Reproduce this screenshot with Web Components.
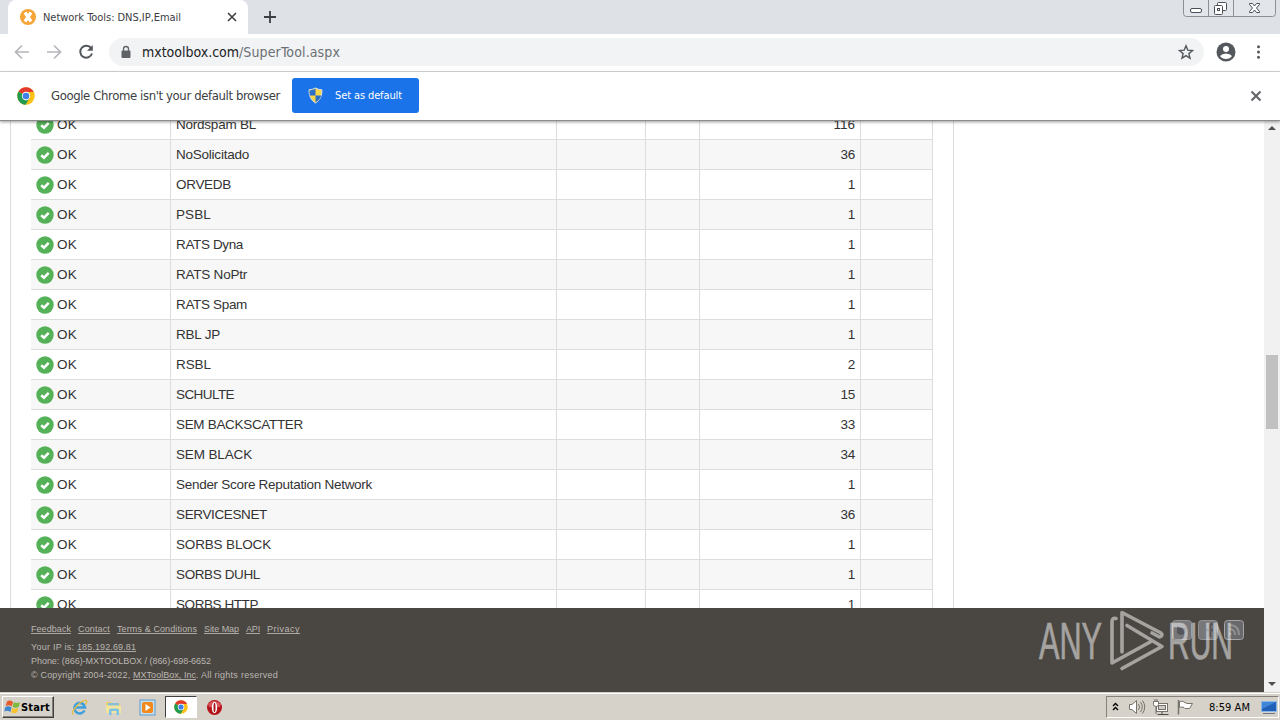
<!DOCTYPE html>
<html lang="en">
<head>
<meta charset="utf-8">
<title>Network Tools: DNS,IP,Email</title>
<style>
    html, body { margin: 0; height: 100%; overflow: hidden; background: #fff; }
    body { font-family: "Liberation Sans", Arial, sans-serif; }
</style>
</head>
<body>
<desktop-screen></desktop-screen>

<script>
const UI_FONT = '"DejaVu Sans Condensed", "DejaVu Sans", "Open Sans", sans-serif';

const CHROME_LOGO = `
    <svg viewBox="0 0 18 18">
        <circle cx="9" cy="9" r="8.700" fill="#fbc116"/>
        <path d="M9 9 L1.500 4.600 A8.700 8.700 0 0 1 16.700 5 H9z" fill="#e33b2e"/>
        <path d="M9 9 L1.500 4.600 A8.700 8.700 0 0 0 8.600 17.700 L12.600 11z" fill="#229a50"/>
        <circle cx="9" cy="9" r="4.200" fill="#fff"/>
        <circle cx="9" cy="9" r="3.300" fill="#3f7fe8"/>
    </svg>`;

function define(name, render) {
    customElements.define(name, class extends HTMLElement {
        constructor() {
            super();
            this.attachShadow({ mode: 'open' });
        }
        connectedCallback() {
            this.shadowRoot.innerHTML = render(this);
        }
    });
}

// Text stretched to a given width by its letter spacing
class FitText extends HTMLElement {
    constructor() {
        super();
        this.attachShadow({ mode: 'open' });
        this.shadowRoot.innerHTML = `
            <style>
                :host { display: block; flex: none; }
                span { display: inline-block; white-space: pre; }
            </style>
            <span><slot></slot></span>`;
    }
    connectedCallback() {
        const span = this.shadowRoot.querySelector('span');
        const width = parseFloat(this.getAttribute('width'));
        const count = this.textContent.length;
        const gap = (width - span.getBoundingClientRect().width) / count;
        span.style.letterSpacing = gap.toFixed(3) + 'px';
        this.style.width = width + 'px';
    }
}

define('window-controls', () => `
    <style>
        :host { display: block; width: 93px; height: 17px; }
        svg { display: block; }
    </style>
    <svg width="93" height="17" fill="none" stroke="#8b8f96">
        <path d="M.5 0V13.500Q.5 16.500 3.500 16.500H89.500Q92.500 16.500 92.500 13.500V0M25.500 0V16M50.500 0V16" fill="#e2e5ea"/>
        <rect x="7.500" y="8.500" width="11" height="4" rx="1.500" stroke="#4b4f57" fill="#fff"/>
        <g stroke="#4b4f57" fill="#fff">
            <rect x="34.500" y="2.500" width="9" height="8" rx="1"/>
            <rect x="31.500" y="5.500" width="8" height="9" rx="1"/>
            <rect x="34.500" y="8.500" width="2" height="2"/>
            <path d="M66.500 3.500H69.500L71.500 6L73.500 3.500H76.500V4.500L73.500 8L76.500 11.500V12.500H73.500L71.500 10L69.500 12.500H66.500V11.500L69.500 8L66.500 4.500Z"/>
        </g>
    </svg>`);

define('browser-tab', () => `
    <style>
        :host {
            display: flex; align-items: center; box-sizing: border-box;
            width: 240px; height: 34px; padding: 0 10px 0 12px;
            background: #fff; border-radius: 8px 8px 0 0;
            font: 11px ${UI_FONT}; color: #3c4043;
        }
        .favicon { width: 16px; height: 16px; margin-right: 7px; }
        .close { width: 12px; height: 12px; margin-left: auto; }
    </style>
    <svg class="favicon" viewBox="0 0 16 16">
        <circle cx="8" cy="8" r="8" fill="#f5a536"/>
        <path d="M5 3.500L11 12.500M11 3.500L5 12.500" stroke="#fff" stroke-width="3.200"/>
    </svg>
    <slot></slot>
    <svg class="close" viewBox="0 0 12 12" stroke="#3c4043" stroke-width="1.600"><path d="M2 2L10 10M10 2L2 10"/></svg>`);

define('tab-strip', () => `
    <style>
        :host { display: flex; height: 34px; background: #dee1e6; padding: 0 4px 0 8px; }
        .plus { width: 12px; height: 12px; margin: 11px 0 0 16px; }
        window-controls { margin-left: auto; }
    </style>
    <browser-tab><fit-text width="138">Network Tools: DNS,IP,Email</fit-text></browser-tab>
    <svg class="plus" viewBox="0 0 12 12" stroke="#3c4043" stroke-width="1.800"><path d="M6 0V12M0 6H12"/></svg>
    <window-controls></window-controls>`);

define('address-bar', () => `
    <style>
        :host {
            display: flex; align-items: center; flex: 1; height: 28px; box-sizing: border-box;
            padding: 0 9px 0 10px; border-radius: 14px; background: #f1f3f4;
            font: 14px ${UI_FONT}; color: #202124;
        }
        .lock { width: 14px; height: 14px; margin-right: 9px; }
        .path { color: #6b6f74; }
        .star { width: 18px; height: 18px; margin-left: auto; }
    </style>
    <svg class="lock" viewBox="0 0 14 14">
        <path d="M4.500 6V4a2.500 2.500 0 0 1 5 0V6" fill="none" stroke="#5f6368" stroke-width="1.300"/>
        <rect x="2.500" y="5.500" width="9" height="7.500" rx="1" fill="#5f6368"/>
    </svg>
    <fit-text width="97">mxtoolbox.com</fit-text><fit-text class="path" width="101">/SuperTool.aspx</fit-text>
    <svg class="star" viewBox="0 0 18 18" fill="none" stroke="#54585d" stroke-width="1.400">
        <path d="M9 2.800L10.800 7.100L15.500 7.500L11.900 10.600L13 15.200L9 12.700L5 15.200L6.100 10.600L2.500 7.500L7.200 7.100Z"/>
    </svg>`);

define('nav-bar', () => `
    <style>
        :host {
            display: flex; align-items: center; height: 38px; box-sizing: border-box; padding: 0 12px 1px 13px;
            background: #fff; border-bottom: 1px solid #d9dadb;
        }
        svg { width: 18px; height: 18px; flex: none; }
        .icons { display: flex; gap: 14px; width: 96px; }
        .profile { width: 20px; height: 20px; margin: 0 16px 0 12px; }
        .menu { width: 16px; }
    </style>
    <div class="icons">
        <svg viewBox="0 0 18 18" fill="none" stroke="#b5b7ba" stroke-width="1.700"><path d="M16 9H3M9 2.500L2.500 9L9 15.500"/></svg>
        <svg viewBox="0 0 18 18" fill="none" stroke="#b5b7ba" stroke-width="1.700"><path d="M2 9H15M9 2.500L15.500 9L9 15.500"/></svg>
        <svg viewBox="0 0 18 18" fill="none" stroke="#54585d" stroke-width="2"><path d="M14.200 5.200A6 6 0 1 0 15 10.500"/><path d="M15.800 2V7.800H10Z" fill="#54585d" stroke="none"/></svg>
    </div>
    <address-bar></address-bar>
    <svg class="profile" viewBox="0 0 20 20">
        <circle cx="10" cy="10" r="9.500" fill="#54585d"/>
        <circle cx="10" cy="7" r="3" fill="#fff"/>
        <path d="M4 14Q6 11.500 10 11.500T16 14Q14 17 10 17T4 14Z" fill="#fff"/>
    </svg>
    <svg class="menu" viewBox="0 0 16 18" fill="#54585d"><circle cx="6.500" cy="3.800" r="1.500"/><circle cx="6.500" cy="9" r="1.500"/><circle cx="6.500" cy="14.200" r="1.500"/></svg>`);

define('info-bar', () => `
    <style>
        :host {
            display: flex; align-items: center; height: 49px; box-sizing: border-box; padding: 0 18px 1px 17px;
            background: #fff; border-bottom: 1px solid #8c8c8c; box-shadow: 0 1px 3px rgba(0, 0, 0, .4);
            position: relative; z-index: 1;
            font: 13px ${UI_FONT}; color: #3c4043;
        }
        .logo { width: 18px; height: 18px; margin-right: 16px; }
        .logo svg { display: block; width: 18px; height: 18px; }
        button {
            display: flex; align-items: center; width: 127px; height: 35px; margin: 0 0 0 12px; padding: 0 0 0 15px;
            border: 0; border-radius: 3px; background: #1a73e8; color: #fff; font: 11px ${UI_FONT};
        }
        button svg { width: 17px; height: 17px; margin-right: 11px; }
        .close { width: 12px; height: 12px; margin-left: auto; }
    </style>
    <div class="logo">${CHROME_LOGO}</div>
    <fit-text width="229">Google Chrome isn't your default browser</fit-text>
    <button>
        <svg viewBox="0 0 17 17">
            <path d="M8.500 1Q11.500 2.700 15 2.800Q15.300 12 8.500 16Q1.700 12 2 2.800Q5.500 2.700 8.500 1Z" fill="#f7d64a" stroke="#d5dde5"/>
            <path d="M8.500 1.800V8.500H2.800Q2.500 6 2.600 3.400Q6 3.200 8.500 1.800ZM8.500 8.500H14.200Q13 13 8.500 15.300Z" fill="#2c6fc7"/>
        </svg>
        <fit-text width="67">Set as default</fit-text>
    </button>
    <svg class="close" viewBox="0 0 12 12" stroke="#5f6368" stroke-width="2"><path d="M1.500 1.500L10.500 10.500M10.500 1.500L1.500 10.500"/></svg>`);

define('table-cell', () => `
    <style>
        :host { display: flex; box-sizing: border-box; height: 29px; border-right: 1px solid #ddd; padding: 0 5px; }
        :host([end]) { justify-content: flex-end; }
    </style>
    <slot></slot>`);

define('status-icon', () => `
    <style>
        :host { display: block; width: 18px; height: 18px; margin: 6px 3px 0 0; }
        svg { display: block; }
    </style>
    <svg width="18" height="18"><circle cx="9" cy="9" r="8.700" fill="#55b158"/><path d="M5.200 9.200L8 11.700L12.700 6.800" fill="none" stroke="#fff" stroke-width="2.500"/></svg>`);

class BlacklistTable extends HTMLElement {
    constructor() {
        super();
        this.attachShadow({ mode: 'open' });
        // name, response time, label width
        this.results = [
            ['Nordspam BL', 116, 80], ['NoSolicitado', 36, 73], ['ORVEDB', 1, 55], ['PSBL', 1, 35],
            ['RATS Dyna', 1, 67], ['RATS NoPtr', 1, 71], ['RATS Spam', 1, 71], ['RBL JP', 1, 44],
            ['RSBL', 2, 35], ['SCHULTE', 15, 58], ['SEM BACKSCATTER', 33, 127], ['SEM BLACK', 34, 76],
            ['Sender Score Reputation Network', 1, 196], ['SERVICESNET', 36, 91], ['SORBS BLOCK', 1, 95],
            ['SORBS DUHL', 1, 84], ['SORBS HTTP', 1, 82],
        ];
    }
    connectedCallback() {
        this.shadowRoot.innerHTML = `
            <style>
                :host {
                    display: block; box-sizing: border-box; width: 944px; margin: -11px 0 0 10px;
                    padding: 0 20px; border: solid #ddd; border-width: 0 1px;
                }
                .row {
                    display: grid; grid-template-columns: 140px 386px 89px 54px 161px 72px;
                    height: 30px; box-sizing: border-box; border-bottom: 1px solid #ddd;
                    font-size: 13.500px; line-height: 29px; color: #333;
                }
                .row:nth-of-type(even) { background: #f7f7f7; }
            </style>
            ${this.results.map(([name, time, width]) => `
            <div class="row">
                <table-cell><status-icon></status-icon><fit-text width="20">OK</fit-text></table-cell>
                <table-cell><fit-text width="${width}">${name}</fit-text></table-cell>
                <table-cell></table-cell>
                <table-cell></table-cell>
                <table-cell end><fit-text width="${String(time).length * 7.2}">${time}</fit-text></table-cell>
                <table-cell></table-cell>
            </div>`).join('')}
        `;
    }
}

define('scroll-bar', () => `
    <style>
        :host {
            display: flex; flex-direction: column; align-items: center; width: 16px;
            background: #f1f1f1; box-sizing: border-box; padding: 5px 0 6px;
        }
        svg { width: 8px; height: 4px; fill: #505050; }
        .thumb { width: 12px; height: 74px; margin: 225px 0 auto; background: #c1c1c1; }
    </style>
    <svg viewBox="0 0 8 4"><path d="M0 4L4 0L8 4Z"/></svg>
    <div class="thumb"></div>
    <svg viewBox="0 0 8 4"><path d="M0 0L4 4L8 0Z"/></svg>`);

define('run-watermark', () => `
    <style>
        :host { display: block; position: absolute; right: 30px; top: 0; opacity: .5; }
        svg { display: block; }
        text { font: 51px "Liberation Sans Narrow", "Liberation Sans", sans-serif; fill: #fff; stroke: #fff; stroke-width: .6px; }
    </style>
    <svg width="200" height="66" viewBox="1034 608 200 66">
        <text x="1039" y="659" textLength="63" lengthAdjust="spacingAndGlyphs">ANY</text>
        <text x="1168" y="659" textLength="65" lengthAdjust="spacingAndGlyphs">RUN</text>
        <g fill="none" stroke="#fff" stroke-width="3.600" stroke-linecap="round" stroke-linejoin="round">
            <path d="M1116 618.500Q1112 617.500 1112 622V663L1151 641.500"/>
            <path d="M1122 652V612.500L1161 633Q1163.500 635.500 1159.500 637L1152 633"/>
            <path d="M1127 625.500L1162 646.500L1122 668.500"/>
        </g>
    </svg>`);

define('site-footer', () => `
    <style>
        :host {
            display: block; box-sizing: border-box; height: 84px; padding: 14px 20px 0 31px;
            background: #4a4641; color: #bab7b2; font-size: 9px; line-height: 14px;
            position: absolute; left: 0; right: 16px; bottom: 0;
        }
        a fit-text { height: 11px; border-bottom: 1px solid #aaa7a2; }
        nav { display: flex; gap: 7px; height: 18px; }
        p { margin: 0; height: 14px; display: flex; }
        .top { display: flex; justify-content: space-between; }
        .social { display: flex; gap: 6px; margin-top: -2px; }
    </style>
    <div class="top">
        <div>
            <nav>
                <a><fit-text width="40">Feedback</fit-text></a>
                <a><fit-text width="32">Contact</fit-text></a>
                <a><fit-text width="80">Terms &amp; Conditions</fit-text></a>
                <a><fit-text width="35">Site Map</fit-text></a>
                <a><fit-text width="14">API</fit-text></a>
                <a><fit-text width="33">Privacy</fit-text></a>
            </nav>
            <p><fit-text width="46">Your IP is: </fit-text><a><fit-text width="59">185.192.69.81</fit-text></a></p>
            <p><fit-text width="180">Phone: (866)-MXTOOLBOX / (866)-698-6652</fit-text></p>
            <p><fit-text width="102">© Copyright 2004-2022, </fit-text><a><fit-text width="63">MXToolBox, Inc</fit-text></a><fit-text width="82">. All rights reserved</fit-text></p>
        </div>
        <div class="social">
            <svg width="20" height="20"><rect x=".5" y=".5" width="19" height="19" rx="3" fill="#77777a" stroke="#939395"/><path d="M5 5Q8 9 14 7Q15 14 9 15Q7 15 5 13" fill="#55555a"/></svg>
            <svg width="20" height="20"><rect x=".5" y=".5" width="19" height="19" rx="3" fill="#77777a" stroke="#939395"/><path d="M12 17V6Q12 4 15 4M8 10H15" stroke="#55555a" stroke-width="2.500" fill="none"/></svg>
            <svg width="20" height="20"><rect x=".5" y=".5" width="19" height="19" rx="3" fill="#69696b" stroke="#a5a5a7"/><g fill="none" stroke="#8f8f91" stroke-width="2"><path d="M5 9Q11 9 11 15M5 5Q15 5 15 15"/></g><circle cx="6" cy="14" r="1.500" fill="#8f8f91"/></svg>
        </div>
    </div>
    <run-watermark></run-watermark>`);

define('start-button', () => `
    <style>
        :host {
            display: flex; align-items: center; box-sizing: border-box; width: 52px; height: 22px; padding-left: 1px;
            background: #d6d2ca; border: 1px solid; border-color: #fff #404040 #404040 #fff; box-shadow: inset -1px -1px #858179;
            font: bold 11px ${UI_FONT}; color: #000;
        }
    </style>
    <svg width="17" height="17" viewBox="0 0 17 17">
        <path d="M3 2.500Q6 .500 9 3L7.700 7.500Q5 5.500 1.700 7Z" fill="#e8592b"/>
        <path d="M9.800 3.300Q13 5 16 3L14.700 7.700Q12 9.500 8.600 7.900Z" fill="#7db83b"/>
        <path d="M1.400 8Q4.500 6.300 7.500 8.500L6.300 13Q3.500 11 .300 12.500Z" fill="#3d86d0"/>
        <path d="M8.300 8.900Q11.500 10.600 14.500 8.700L13.200 13.300Q10 15.200 7 13.500Z" fill="#f7c32e"/>
    </svg>
    <fit-text width="29">Start</fit-text>`);

define('system-tray', () => `
    <style>
        :host {
            display: flex; align-items: center; box-sizing: border-box; width: 173px; height: 22px; padding: 0 1px 0 5px;
            border: 1px solid; border-color: #858179 #fff #fff #858179;
            font: 11px ${UI_FONT}; color: #000;
        }
        fit-text { margin-left: 15px; }
        .desk { margin-left: auto; }
    </style>
    <svg width="82" height="18" viewBox="1112 698 82 18" fill="none" stroke="#77736c">
        <path d="M1113 706L1115.500 703.500L1118 706M1113 710L1115.500 707.500L1118 710" stroke="#000" stroke-width="1.400"/>
        <path d="M1129.500 704.500H1132L1136.500 700.500V713.500L1132 709.500H1129.500Z" fill="#fff"/>
        <path d="M1138.500 704Q1140.500 707 1138.500 710M1140.500 702Q1144 707 1140.500 712M1142.500 700.500Q1147 707 1142.500 713.500"/>
        <rect x="1156.500" y="703.500" width="11" height="8" fill="#fff"/>
        <rect x="1158.500" y="705.500" width="7" height="4" fill="#cfccc5"/>
        <path d="M1157.500 714.500H1168.500M1162 712V714" stroke="#4e4b47"/>
        <path d="M1153.500 701.500V704.500Q1153.500 706.500 1156 706.500T1158.500 704.500V701.500ZM1155 699V701M1157 699V701M1156 707V714" fill="#fff"/>
        <path d="M1178.500 700V714.500" stroke-width="1.500"/>
        <path d="M1179.500 701.500Q1183 700.500 1185 702.500L1187 703.500H1192.500L1189.500 708.500H1185L1184 707.500Q1182 706.500 1179.500 707.500Z" fill="#fff"/>
    </svg>
    <fit-text width="41">8:59 AM</fit-text>
    <svg class="desk" width="16" height="15" viewBox="0 0 16 15"><rect x=".5" y="1.500" width="15" height="10" fill="#2160b8" stroke="#8eb6e4"/><path d="M1 2H15L1 9Z" fill="#4086d6"/><path d="M2 13.500H14" stroke="#6a7788"/></svg>`);

define('task-bar', () => `
    <style>
        :host {
            display: flex; align-items: center; box-sizing: border-box; height: 28px; padding: 2px 0 1px 2px;
            background: #d6d2ca; border-top: 1px solid #d6d2ca; box-shadow: inset 0 1px #fff;
        }
        .apps { display: flex; align-items: center; margin-left: 8px; }
        .app { display: flex; align-items: center; justify-content: center; width: 34px; height: 22px; box-sizing: border-box; }
        .active { width: 32px; margin: 0 0 0 1px; background: #fff; border: 1px solid; border-color: #404040 #fff #fff #404040; }
        .app svg { width: 17px; height: 17px; }
        .active svg { width: 14px; height: 14px; }
        system-tray { margin: 0 1px 0 auto; }
    </style>
    <start-button></start-button>
    <div class="apps">
        <div class="app">
            <svg viewBox="0 0 17 17" fill="none">
                <path d="M13.500 11.500A5.300 5.300 0 1 1 14 8.500H5" stroke="#3fa0dc" stroke-width="2.600"/>
                <path d="M2.500 15.500Q-.500 14.500 4.500 8.500Q11 1 15 1.500Q17 2.300 14.300 5.500" stroke="#e5bd45" stroke-width="1.300"/>
            </svg>
        </div>
        <div class="app">
            <svg viewBox="0 0 17 17">
                <path d="M1 3H6L7 4.500H15V14H1Z" fill="#e9cf72"/>
                <path d="M3 4H14V7H3Z" fill="#87bfd8"/>
                <path d="M1 6.500H16V14H1Z" fill="#f5e59c"/>
                <path d="M4 16V11Q4 9.500 6 9.500H12Q14 9.500 14 11V16H11.500V12H6.500V16Z" fill="#7fc1e2"/>
            </svg>
        </div>
        <div class="app">
            <svg viewBox="0 0 17 17">
                <rect x="1" y="1" width="15" height="15" fill="#c8def0" stroke="#5c9bcf"/>
                <rect x="3" y="3" width="11" height="11" rx="2" fill="#f18a1d"/>
                <path d="M6.500 5L11.500 8.500L6.500 12Z" fill="#fff"/>
            </svg>
        </div>
        <div class="app active">${CHROME_LOGO}</div>
        <div class="app">
            <svg viewBox="0 0 17 17">
                <circle cx="8.500" cy="8.500" r="7.500" fill="#b51219"/>
                <path d="M2 5Q8 -1 15 5L14 8H3Z" fill="#d9555a"/>
                <ellipse cx="8.500" cy="8.500" rx="2.700" ry="5.800" fill="#fff"/>
                <ellipse cx="8.500" cy="8.500" rx="1" ry="4.800" fill="#a8141a"/>
            </svg>
        </div>
    </div>
    <system-tray></system-tray>`);

define('desktop-screen', () => `
    <style>
        :host { display: flex; flex-direction: column; width: 1280px; height: 720px; overflow: hidden; }
        main { display: flex; flex: 1; min-height: 0; overflow: hidden; position: relative; }
        .content { flex: 1; overflow: hidden; }
    </style>
    <tab-strip></tab-strip>
    <nav-bar></nav-bar>
    <info-bar></info-bar>
    <main>
        <div class="content"><blacklist-table></blacklist-table></div>
        <scroll-bar></scroll-bar>
        <site-footer></site-footer>
    </main>
    <task-bar></task-bar>`);

customElements.define('blacklist-table', BlacklistTable);
customElements.define('fit-text', FitText);
</script>
</body>
</html>
